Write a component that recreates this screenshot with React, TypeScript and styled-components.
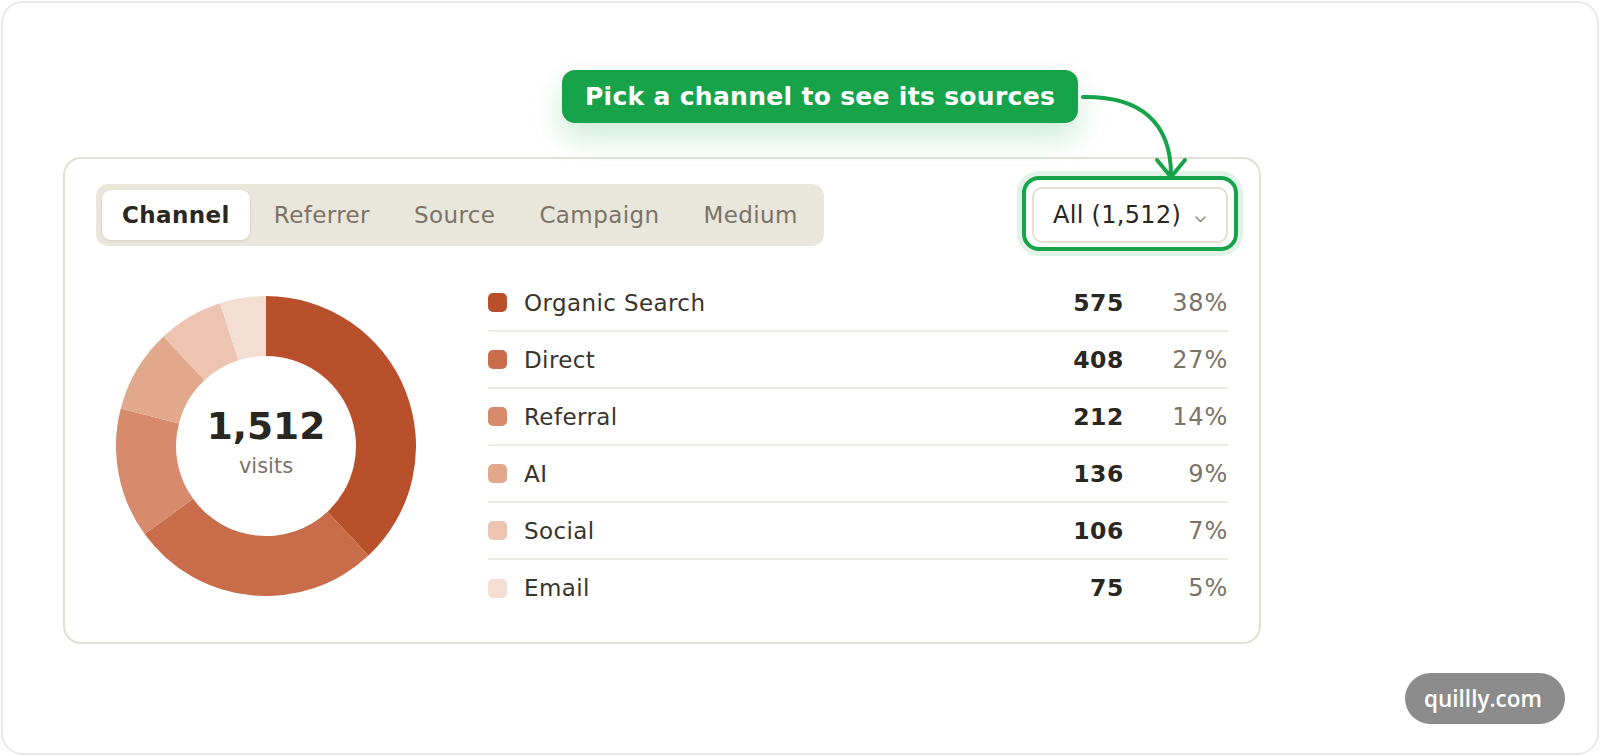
import React from 'react';
import styled, { createGlobalStyle } from 'styled-components';

const GlobalStyle = createGlobalStyle`
  html, body {
    margin: 0;
    padding: 0;
    background: #ffffff;
  }
  body {
    font-family: "DejaVu Sans", Verdana, sans-serif;
    color: #2a2620;
  }
  * { box-sizing: border-box; }
`;

const Frame = styled.div`
  position: relative;
  width: 1598px;
  height: 754px;
  margin: 1px;
  border: 2px solid #e8e8e8;
  border-radius: 22px;
  padding: 154px 0 0 60px;
  overflow: hidden;
`;

const Card = styled.section`
  width: 1198px;
  border: 2px solid #e3dfd4;
  border-radius: 18px;
  padding: 25px 31px 26px;
  background: #fff;
`;

const Header = styled.div`
  display: flex;
  align-items: center;
  justify-content: space-between;
`;

const Tabs = styled.div`
  display: flex;
  gap: 4px;
  padding: 6px;
  background: #e9e6dc;
  border-radius: 12px;
`;

const Tab = styled.button<{ $active?: boolean }>`
  height: 50px;
  padding: 0 20px;
  border: 0;
  border-radius: 9px;
  font-family: "DejaVu Sans", Verdana, sans-serif;
  font-size: 23px;
  letter-spacing: 0.4px;
  font-weight: ${({ $active }) => ($active ? 700 : 400)};
  color: ${({ $active }) => ($active ? '#2a2620' : '#7a7366')};
  background: ${({ $active }) => ($active ? '#ffffff' : 'transparent')};
  box-shadow: ${({ $active }) => ($active ? '0 1px 3px rgba(60, 50, 30, 0.12)' : 'none')};
  cursor: pointer;
`;

const Highlight = styled.div`
  position: relative;

  &::before {
    content: '';
    position: absolute;
    inset: -11px -10px -8px -10px;
    border: 4px solid #17a34a;
    border-radius: 17px;
    box-shadow: 0 0 0 5px rgba(23, 163, 74, 0.13);
    pointer-events: none;
  }
`;

const Select = styled.button`
  display: flex;
  align-items: center;
  gap: 14px;
  width: 196px;
  height: 56px;
  padding: 0 20px 0 19px;
  border: 2px solid #e3dfd4;
  border-radius: 10px;
  background: #fff;
  font-family: "DejaVu Sans", Verdana, sans-serif;
  font-size: 24px;
  letter-spacing: 0.3px;
  color: #2a2620;
  white-space: nowrap;
  cursor: pointer;

  svg {
    flex: none;
    margin-top: 8px;
  }
`;

const Body = styled.div`
  display: flex;
  align-items: center;
  gap: 52px;
  margin-top: 29px;
`;

const DonutWrap = styled.div`
  width: 340px;
  display: flex;
  justify-content: center;
`;

const Donut = styled.div`
  position: relative;
  width: 300px;
  height: 300px;
`;

const DonutLabel = styled.div`
  position: absolute;
  inset: 0;
  display: flex;
  flex-direction: column;
  align-items: center;
  justify-content: center;
  gap: 10px;
  padding-bottom: 6px;
`;

const Total = styled.div`
  font-size: 37.5px;
  font-weight: 700;
  line-height: 1;
  color: #2a2620;
`;

const TotalCaption = styled.div`
  font-size: 21px;
  line-height: 1;
  color: #7a7366;
`;

const List = styled.ul`
  flex: 1;
  list-style: none;
  margin: 0;
  padding: 0;
`;

const Row = styled.li`
  display: grid;
  grid-template-columns: 19px 1fr auto 87px;
  align-items: center;
  column-gap: 17px;
  height: 57px;
  border-bottom: 2px solid #eeebe4;

  &:last-child {
    border-bottom: 0;
    height: 56px;
  }
`;

const Swatch = styled.span<{ $color: string }>`
  width: 19px;
  height: 19px;
  border-radius: 5px;
  background: ${({ $color }) => $color};
`;

const Label = styled.span`
  font-size: 23px;
  letter-spacing: 0.4px;
  color: #3a342c;
`;

const Count = styled.span`
  font-size: 23.5px;
  letter-spacing: 0.6px;
  font-weight: 700;
  color: #2a2620;
  text-align: right;
`;

const Percent = styled.span`
  font-size: 24px;
  letter-spacing: 0.8px;
  color: #7a7366;
  text-align: right;
`;

const Callout = styled.div`
  position: absolute;
  left: 559px;
  top: 67px;
  height: 53px;
  padding: 0 23px;
  display: flex;
  align-items: center;
  background: #17a34a;
  border-radius: 13px;
  color: #fff;
  font-size: 25px;
  letter-spacing: 0.3px;
  font-weight: 700;
  white-space: nowrap;
  box-shadow: 0 14px 30px rgba(23, 163, 74, 0.22);
`;

const ArrowLayer = styled.svg`
  position: absolute;
  left: -3px;
  top: -3px;
  pointer-events: none;
`;

const Badge = styled.div`
  position: absolute;
  right: 32px;
  bottom: 29px;
  height: 51px;
  padding: 0 23px 0 19px;
  display: flex;
  align-items: center;
  border-radius: 26px;
  background: #8c8c8c;
  color: #fff;
  font-family: "Open Sans", "DejaVu Sans", sans-serif;
  font-size: 22.5px;
  font-weight: 600;
`;

const channels = [
  { name: 'Organic Search', count: 575, pct: '38%', color: '#b9502c' },
  { name: 'Direct', count: 408, pct: '27%', color: '#c86c4a' },
  { name: 'Referral', count: 212, pct: '14%', color: '#d78a6c' },
  { name: 'AI', count: 136, pct: '9%', color: '#e2a88c' },
  { name: 'Social', count: 106, pct: '7%', color: '#ecc4b0' },
  { name: 'Email', count: 75, pct: '5%', color: '#f4ddd2' },
];

const total = channels.reduce((s, c) => s + c.count, 0);

function sector(a0: number, a1: number, R: number, r: number, c: number) {
  const pt = (a: number, rad: number) => [c + rad * Math.sin(a), c - rad * Math.cos(a)];
  const [x0, y0] = pt(a0, R);
  const [x1, y1] = pt(a1, R);
  const [x2, y2] = pt(a1, r);
  const [x3, y3] = pt(a0, r);
  const large = a1 - a0 > Math.PI ? 1 : 0;
  return `M${x0} ${y0} A${R} ${R} 0 ${large} 1 ${x1} ${y1} L${x2} ${y2} A${r} ${r} 0 ${large} 0 ${x3} ${y3} Z`;
}

const DonutChart = () => {
  let acc = 0;
  return (
    <svg width="300" height="300" viewBox="0 0 300 300">
      {channels.map((c) => {
        const a0 = (acc / total) * Math.PI * 2;
        acc += c.count;
        const a1 = (acc / total) * Math.PI * 2;
        return <path key={c.name} d={sector(a0, a1, 150, 90, 150)} fill={c.color} />;
      })}
    </svg>
  );
};

export default function App() {
  return (
    <>
      <GlobalStyle />
      <Frame>
        <Card>
          <Header>
            <Tabs>
              <Tab $active>Channel</Tab>
              <Tab>Referrer</Tab>
              <Tab>Source</Tab>
              <Tab>Campaign</Tab>
              <Tab>Medium</Tab>
            </Tabs>
            <Highlight>
              <Select>
                All (1,512)
                <svg width="11" height="7" viewBox="0 0 11 7">
                  <path d="M1 1 L5.5 5.5 L10 1" fill="none" stroke="#8a8378" strokeWidth="1.4" strokeLinecap="round" strokeLinejoin="round" />
                </svg>
              </Select>
            </Highlight>
          </Header>
          <Body>
            <DonutWrap>
              <Donut>
                <DonutChart />
                <DonutLabel>
                  <Total>1,512</Total>
                  <TotalCaption>visits</TotalCaption>
                </DonutLabel>
              </Donut>
            </DonutWrap>
            <List>
              {channels.map((c) => (
                <Row key={c.name}>
                  <Swatch $color={c.color} />
                  <Label>{c.name}</Label>
                  <Count>{c.count}</Count>
                  <Percent>{c.pct}</Percent>
                </Row>
              ))}
            </List>
          </Body>
        </Card>

        <Callout>Pick a channel to see its sources</Callout>
        <ArrowLayer width="1600" height="756" viewBox="0 0 1600 756">
          <path d="M1083 97 C1140 96 1171 122 1171 175" fill="none" stroke="#17a34a" strokeWidth="4" strokeLinecap="round" />
          <path d="M1157 160 L1171 177 L1185 160" fill="none" stroke="#17a34a" strokeWidth="4" strokeLinecap="round" strokeLinejoin="round" />
        </ArrowLayer>
        <Badge>quillly.com</Badge>
      </Frame>
    </>
  );
}
